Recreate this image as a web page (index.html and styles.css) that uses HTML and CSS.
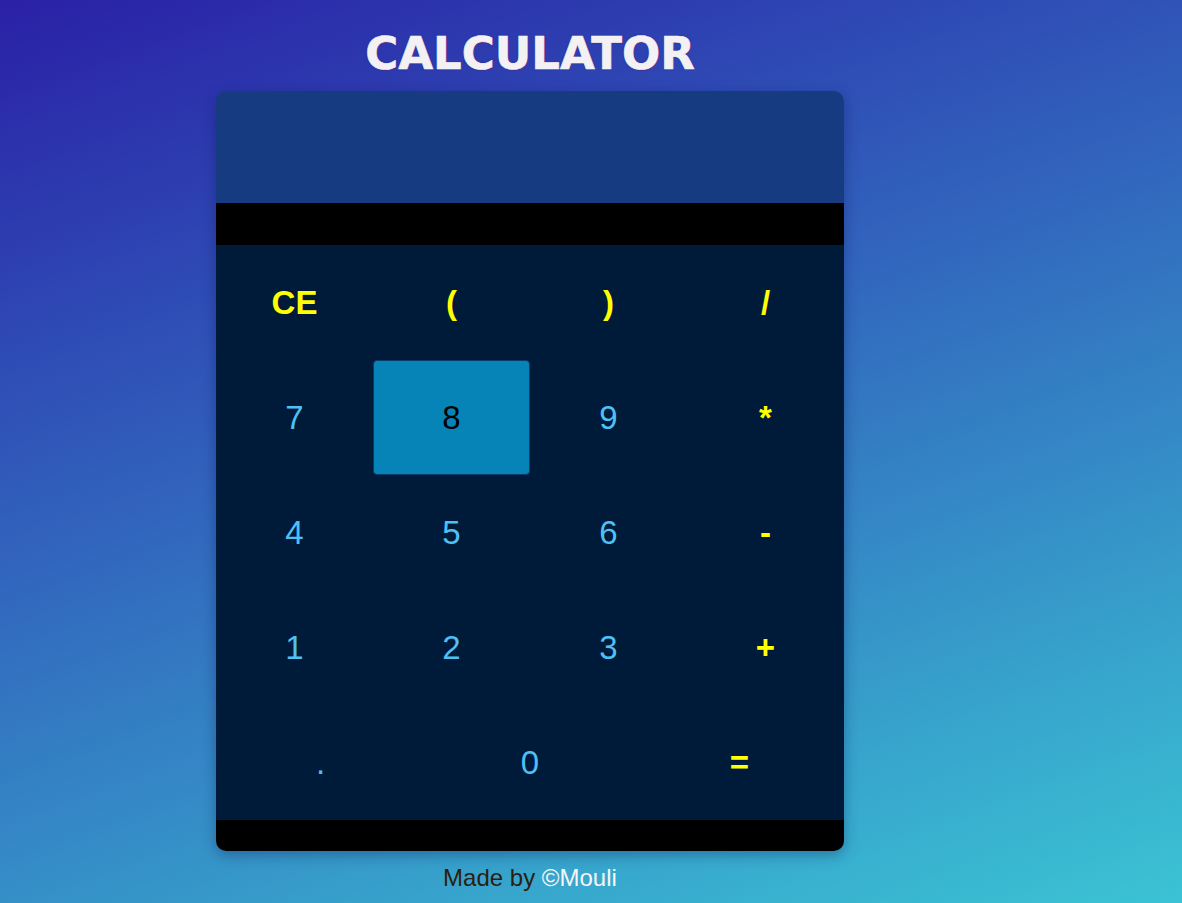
FILE: index.html
```html
<!DOCTYPE html>
<html>
<head>
<meta charset="utf-8">
<title>Calculator</title>
<link rel="stylesheet" href="styles.css">
</head>
<body>
<main class="page">
  <h1 class="title">CALCULATOR</h1>
  <div class="calc">
    <div class="display"></div>
    <div class="input-bar"></div>
    <div class="keys">
      <button class="key op">CE</button>
      <button class="key op">(</button>
      <button class="key op">)</button>
      <button class="key op">/</button>
      <button class="key">7</button>
      <button class="key active">8</button>
      <button class="key">9</button>
      <button class="key op">*</button>
      <button class="key">4</button>
      <button class="key">5</button>
      <button class="key">6</button>
      <button class="key op">-</button>
      <button class="key">1</button>
      <button class="key">2</button>
      <button class="key">3</button>
      <button class="key op">+</button>
    </div>
    <div class="keys last">
      <button class="key">.</button>
      <button class="key">0</button>
      <button class="key op">=</button>
    </div>
    <div class="bottom-bar"></div>
  </div>
  <p class="footer">Made by <span class="author">©Mouli</span></p>
</main>
</body>
</html>
```

FILE: styles.css
```css
html, body {
  margin: 0;
  padding: 0;
  height: 100%;
}
body {
  background: linear-gradient(160deg, #2a20a6 0%, #3160bc 40%, #37a4cc 80%, #3bc3d4 100%);
  font-family: "Liberation Sans", Arial, sans-serif;
  overflow: hidden;
}
.page {
  width: 628px;
  margin-left: 216px;
  display: flex;
  flex-direction: column;
  align-items: center;
}
.title {
  margin: 26px 0 0 0;
  height: 65px;
  font-family: "DejaVu Sans", "Liberation Sans", sans-serif;
  font-size: 45px;
  line-height: 56px;
  font-weight: bold;
  color: #f4f1f4;
  letter-spacing: 0;
  -webkit-text-stroke: 0.6px #f4f1f4;
  text-shadow: 1px 1px 0 #5a2a8a, -1px -1px 0 #2a3aa8, 0 0 2px #1c2a90;
}
.calc {
  width: 628px;
  border-radius: 10px;
  overflow: hidden;
  box-shadow: 0 4px 14px rgba(10, 20, 80, 0.35);
  display: flex;
  flex-direction: column;
}
.display {
  height: 112px;
  background: #173b80;
}
.input-bar {
  height: 42px;
  background: #000;
}
.keys {
  display: grid;
  grid-template-columns: repeat(4, 1fr);
  grid-auto-rows: 115px;
  background: #001b3a;
}
.keys.last {
  grid-template-columns: repeat(3, 1fr);
}
.key {
  border: 1px solid transparent;
  border-radius: 4px;
  background: transparent;
  color: #4ec0f4;
  font-family: "Liberation Sans", Arial, sans-serif;
  font-size: 33px;
  padding: 0;
  cursor: pointer;
}
.key.op {
  color: #ffff00;
  font-weight: bold;
}
.key.active {
  background: #0684b8;
  border-color: #0a3a66;
  color: #000;
}
.bottom-bar {
  height: 31px;
  background: #000;
}
.footer {
  margin: 13px 0 0 0;
  font-size: 24px;
  color: #2a1e12;
}
.author {
  color: #f6f6f6;
}
```
